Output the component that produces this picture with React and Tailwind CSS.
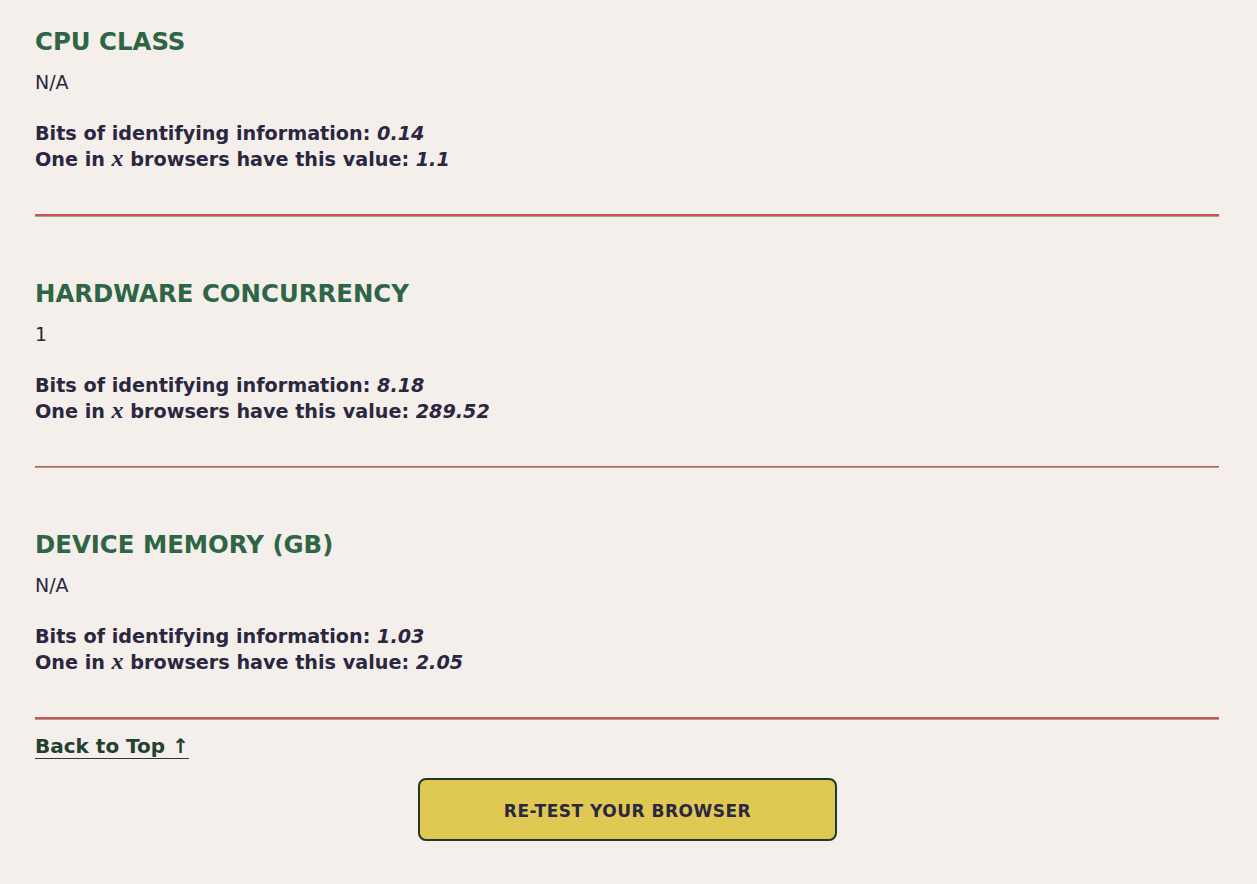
import React from 'react';

const sections = [
  { title: 'CPU CLASS', value: 'N/A', bits: '0.14', oneIn: '1.1' },
  { title: 'HARDWARE CONCURRENCY', value: '1', bits: '8.18', oneIn: '289.52' },
  { title: 'DEVICE MEMORY (GB)', value: 'N/A', bits: '1.03', oneIn: '2.05' },
];

const FingerprintSection = ({ title, value, bits, oneIn }) => (
  <div className="pt-[62px] first:pt-[27px]">
    <h3 className="text-[24.4px] leading-[30px] font-bold text-[#2e6645]">{title}</h3>
    <p className="text-[19px] leading-[26px] text-[#2b2740] mt-[12px]">{value}</p>
    <div className="mt-[26px] text-[19.2px] leading-[26px] font-bold text-[#2b2740]">
      <div>
        Bits of identifying information: <em className="font-bold">{bits}</em>
      </div>
      <div>
        One in <var className="font-['Liberation_Serif',serif] italic font-bold text-[24px] leading-[20px]">x</var> browsers have this value: <em className="font-bold">{oneIn}</em>
      </div>
    </div>
    <div className="mt-[41px]">
      <div className="h-[1.5px] bg-[#c9584c]" />
      <div className="h-px bg-[#a99e9b]" />
    </div>
  </div>
);

export default function App() {
  return (
    <div className="min-h-[884px] bg-[#f4efeb] font-['DejaVu_Sans',sans-serif] pl-[35px] pr-[38px] pb-[40px]">
      <div>
        {sections.map((s) => (
          <FingerprintSection key={s.title} {...s} />
        ))}
      </div>
      <a
        href="#top"
        className="inline-block mt-[14px] text-[20px] leading-[24px] font-bold text-[#24402f] border-b border-[#24402f]"
      >
        Back to Top ↑
      </a>
      <div className="flex justify-center mt-[18px] pl-[1px]">
        <button className="w-[419px] h-[63px] pt-[5px] rounded-[8px] border-2 border-[#1f3a2a] bg-[#dfc952] text-[17px] tracking-[0.5px] font-bold text-[#2b2740]">
          RE-TEST YOUR BROWSER
        </button>
      </div>
    </div>
  );
}
